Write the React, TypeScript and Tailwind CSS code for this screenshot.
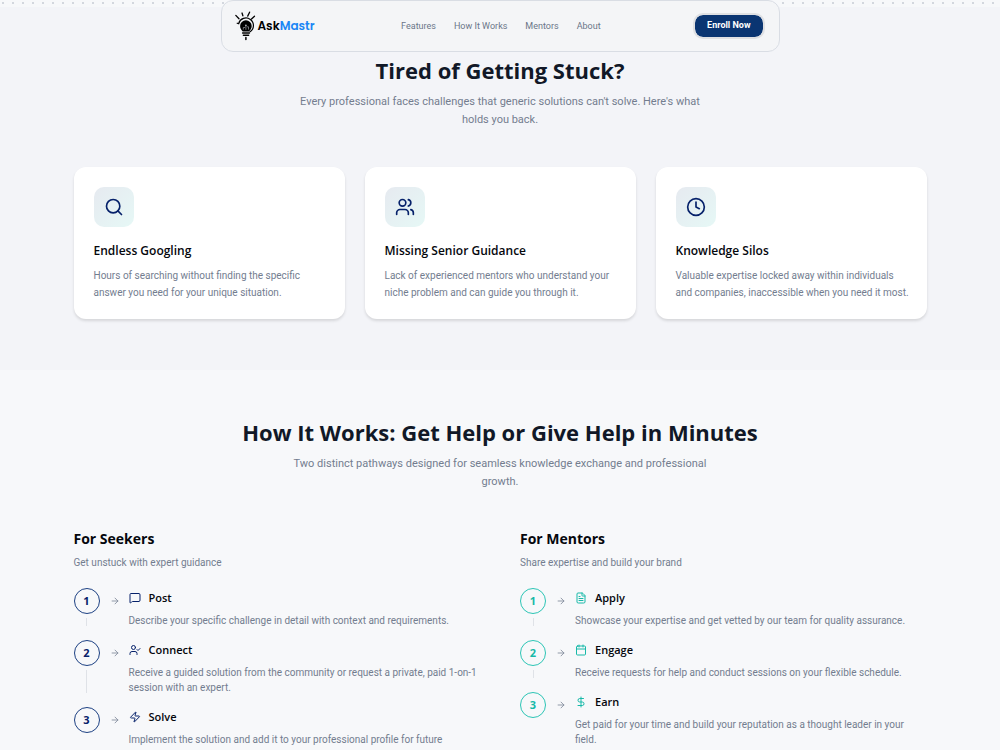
import React from 'react';
import {
  ArrowRight,
  Calendar,
  Clock,
  DollarSign,
  FileText,
  MessageSquare,
  Search,
  UserCheck,
  Users,
  Zap,
  type LucideIcon,
} from 'lucide-react';

interface Problem {
  icon: LucideIcon;
  title: string;
  description: string;
}

interface Step {
  icon: LucideIcon;
  title: string;
  description: string;
}

const navLinks = [
  { label: 'Features', href: '#features' },
  { label: 'How It Works', href: '#how-it-works' },
  { label: 'Mentors', href: '#mentors' },
  { label: 'About', href: '#about' },
];

const problems: Problem[] = [
  {
    icon: Search,
    title: 'Endless Googling',
    description: 'Hours of searching without finding the specific answer you need for your unique situation.',
  },
  {
    icon: Users,
    title: 'Missing Senior Guidance',
    description: 'Lack of experienced mentors who understand your niche problem and can guide you through it.',
  },
  {
    icon: Clock,
    title: 'Knowledge Silos',
    description: 'Valuable expertise locked away within individuals and companies, inaccessible when you need it most.',
  },
];

const seekerSteps: Step[] = [
  {
    icon: MessageSquare,
    title: 'Post',
    description: 'Describe your specific challenge in detail with context and requirements.',
  },
  {
    icon: UserCheck,
    title: 'Connect',
    description: 'Receive a guided solution from the community or request a private, paid 1-on-1 session with an expert.',
  },
  {
    icon: Zap,
    title: 'Solve',
    description: 'Implement the solution and add it to your professional profile for future',
  },
];

const mentorSteps: Step[] = [
  {
    icon: FileText,
    title: 'Apply',
    description: 'Showcase your expertise and get vetted by our team for quality assurance.',
  },
  {
    icon: Calendar,
    title: 'Engage',
    description: 'Receive requests for help and conduct sessions on your flexible schedule.',
  },
  {
    icon: DollarSign,
    title: 'Earn',
    description: 'Get paid for your time and build your reputation as a thought leader in your field.',
  },
];

function Logo() {
  return (
    <a href="#top" className="flex items-center" aria-label="AskMastr">
      <svg viewBox="0 0 24 30" className="h-[30px] w-6" fill="none" stroke="#000" strokeLinecap="round">
        {/* rays */}
        <path d="M1.8 4.4L5 7.8M8 2l.9 2.8M15.6 1.2l-1.9 3.9M20.5 5.3l-3 2.8" strokeWidth="1.3" />
        {/* glass outline */}
        <path d="M3.2 12.2l1.6.6M4.7 12.5a7.5 7.5 0 1 1 11.3 8.3" strokeWidth="1.2" />
        {/* bulb */}
        <path
          d="M11.9 9.2a5.8 5.8 0 0 0-5.8 5.8c0 2.4 1.2 4 2.7 5.5h6.2c1.5-1.5 2.7-3.1 2.7-5.5a5.8 5.8 0 0 0-5.8-5.8z"
          fill="#000"
          stroke="none"
        />
        <path d="M9.3 18.2v-1.7h1.3M11.9 18.4v-3.6M14.5 18.2v-2.4h-1" stroke="#8f9297" strokeWidth=".8" />
        <circle cx="11.9" cy="14.4" r=".8" fill="#b9bcc1" stroke="none" />
        <path d="M8.6 22h6.8M9.4 24.2h5.2M11.9 26.5v2" strokeWidth="1.5" />
      </svg>
      <span className="font-[Poppins,Inter,sans-serif] text-[12px] font-semibold leading-4 text-black">
        Ask<span className="text-[#1a86f5]">Mastr</span>
      </span>
    </a>
  );
}

function Navbar() {
  return (
    <header className="fixed inset-x-0 top-0 z-50 flex justify-center px-4">
      <div className="flex h-[52px] w-full max-w-[559px] items-center justify-between rounded-xl border border-[#d9dde4] bg-[#f4f5f7] pl-3 pr-[14px]">
        <Logo />
        <nav className="mr-1.5 flex items-center gap-[18px]">
          {navLinks.map((link) => (
            <a key={link.label} href={link.href} className="font-[Roboto,sans-serif] text-[9px] leading-4 text-[#6b7589]">
              {link.label}
            </a>
          ))}
        </nav>
        <button
          type="button"
          className="h-[26px] rounded-[10px] border-2 border-[#dfe0e3] bg-[#0a3572] bg-clip-padding px-3 font-[Roboto,sans-serif] text-[9px] font-bold text-white"
        >
          Enroll Now
        </button>
      </div>
    </header>
  );
}

function SectionHeading({ title, text }: { title: string; text: string }) {
  return (
    <div className="mx-auto max-w-[420px] text-center">
      <h2 className="-mx-16 text-[22px] font-bold leading-7 text-[#111827]">{title}</h2>
      <p className="mt-[9px] font-[Roboto,sans-serif] text-[11px] leading-[18px] text-[#737d8f]">{text}</p>
    </div>
  );
}

function ProblemCard({ icon: Icon, title, description }: Problem) {
  return (
    <div className="rounded-xl bg-white px-5 pb-[18px] pt-5 shadow-[0_2px_3px_rgba(0,0,0,0.12)]">
      <div className="flex h-10 w-10 items-center justify-center rounded-[10px] bg-gradient-to-br from-[#e6eaf0] to-[#e6f8f6]">
        <Icon className="h-5 w-5 text-[#06216a]" />
      </div>
      <h3 className="mt-3 text-[12px] font-semibold leading-6 text-[#05070d]">{title}</h3>
      <p className="-mr-1 mt-1 font-[Roboto,sans-serif] text-[10px] leading-[17px] text-[#737d8f]">{description}</p>
    </div>
  );
}

function StepList({ steps, tone }: { steps: Step[]; tone: 'navy' | 'teal' }) {
  const color = tone === 'navy' ? 'text-[#06216a]' : 'text-[#17b9a8]';
  const ring = tone === 'navy' ? 'border-[#1d4183] text-[#06216a]' : 'border-[#2cc5b5] text-[#17b9a8]';

  return (
    <ol className="mt-[15px]">
      {steps.map(({ icon: Icon, title, description }, index) => (
        <li key={title} className="flex">
          <div className="flex w-[26px] flex-col items-center">
            <span className={`flex h-[26px] w-[26px] shrink-0 items-center justify-center rounded-full border text-[11px] font-bold ${ring}`}>
              {index + 1}
            </span>
            {index < steps.length - 1 && <span className="mb-[14px] mt-1 w-px flex-1 bg-[#dfe2e7]" />}
          </div>
          <ArrowRight className="ml-[10px] mt-2 h-[10px] w-[10px] shrink-0 text-[#7d8798]" />
          <div className="ml-[9px] flex-1 pb-3">
            <h4 className="flex items-center gap-2 text-[11px] font-semibold leading-5 text-[#05070d]">
              <Icon className={`h-3 w-3 ${color}`} />
              {title}
            </h4>
            <p className="mt-[5px] font-[Roboto,sans-serif] text-[10px] leading-[15px] text-[#737d8f]">{description}</p>
          </div>
        </li>
      ))}
    </ol>
  );
}

export default function App() {
  return (
    <div id="top" className="min-h-screen overflow-hidden bg-[#f7f8fa] font-['Open_Sans',sans-serif]">
      <Navbar />

      <div className="h-[7px] bg-[radial-gradient(circle,#d3d7de_1px,transparent_1px)] bg-[size:10px_10px] bg-[position:-2px_-2px]" />

      <section id="features" className="bg-[#f3f4f8] px-6 pb-[51px] pt-[49px]">
        <div className="mx-auto max-w-[853px]">
          <SectionHeading
            title="Tired of Getting Stuck?"
            text="Every professional faces challenges that generic solutions can't solve. Here's what holds you back."
          />
          <div className="mt-[38px] grid grid-cols-3 gap-5">
            {problems.map((problem) => (
              <ProblemCard key={problem.title} {...problem} />
            ))}
          </div>
        </div>
      </section>

      <section id="how-it-works" className="px-6 pt-12">
        <div className="mx-auto max-w-[853px]">
          <SectionHeading
            title="How It Works: Get Help or Give Help in Minutes"
            text="Two distinct pathways designed for seamless knowledge exchange and professional growth."
          />
          <div className="mt-[38px] grid grid-cols-2 gap-10">
            <div>
              <h3 className="text-[14px] font-bold leading-5 text-[#05070d]">For Seekers</h3>
              <p className="mt-1 font-[Roboto,sans-serif] text-[10px] leading-5 text-[#737d8f]">
                Get unstuck with expert guidance
              </p>
              <StepList steps={seekerSteps} tone="navy" />
            </div>
            <div id="mentors">
              <h3 className="text-[14px] font-bold leading-5 text-[#05070d]">For Mentors</h3>
              <p className="mt-1 font-[Roboto,sans-serif] text-[10px] leading-5 text-[#737d8f]">
                Share expertise and build your brand
              </p>
              <StepList steps={mentorSteps} tone="teal" />
            </div>
          </div>
        </div>
      </section>
    </div>
  );
}
